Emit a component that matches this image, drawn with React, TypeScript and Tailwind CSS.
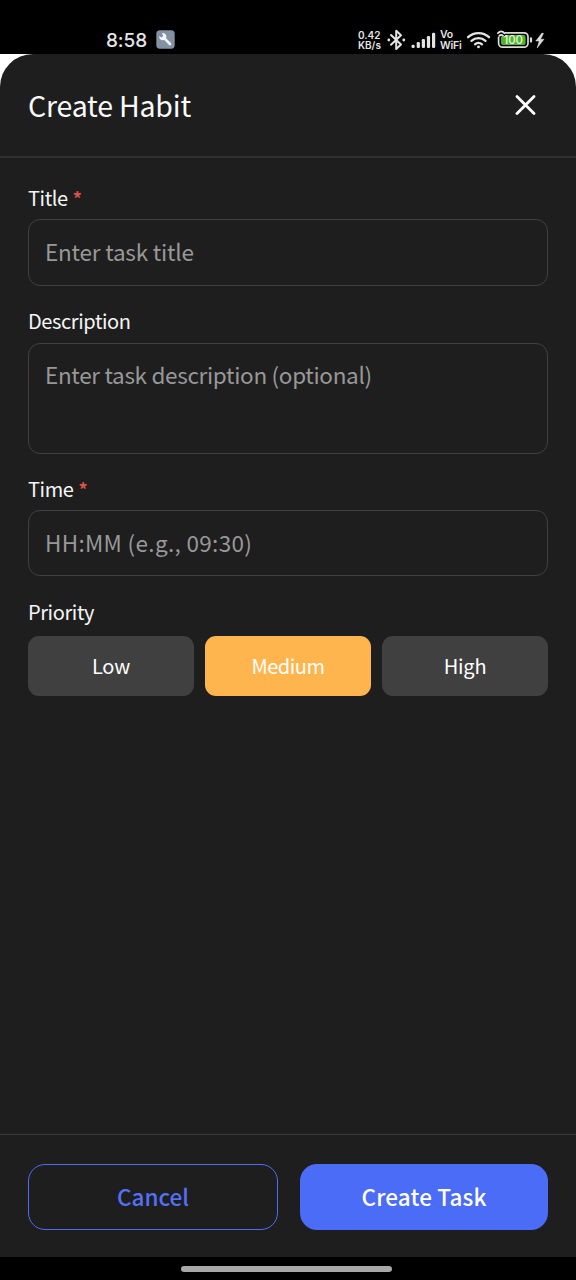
import React from "react";

function StatusBar() {
  return (
    <div className="flex h-[54px] shrink-0 items-start bg-black pt-[26px] text-[#e4e4e4]">
      <span className="ml-[106px] mt-[1px] w-[50px] whitespace-nowrap font-['Inter'] text-[19px] font-medium leading-[28px] tracking-[-0.1px]">8:58</span>
      <svg className="mt-[4px] h-[19px] w-[19px] shrink-0" viewBox="0 0 19 19">
        <rect x="0.3" y="0.3" width="18.4" height="18.4" rx="3.6" fill="#8292a3" />
        <path d="M8.2 8.2 14 14" stroke="#f3f5f7" strokeWidth="2.6" strokeLinecap="round" />
        <path d="M6 3.2a3.6 3.6 0 1 1-2.8 3l2.4 1.3 1.6-1.6z" fill="#f3f5f7" />
      </svg>
      <div className="ml-[183px] mt-[4px] w-[29px] shrink-0 whitespace-nowrap font-['Inter'] text-[10px] font-semibold leading-[10px]">
        <div>0.42</div>
        <div>KB/s</div>
      </div>
      <svg className="mt-[3px] h-[22px] w-[19px] shrink-0" viewBox="0 0 19 22" fill="none" stroke="currentColor" strokeWidth="2">
        <path d="M4 6 14 15.5 9.2 20V1.8L14 6.3 4 15.8" strokeLinejoin="round" strokeLinecap="round" />
        <circle cx="1.8" cy="11" r="1.4" fill="currentColor" stroke="none" />
        <circle cx="16.8" cy="11" r="1.4" fill="currentColor" stroke="none" />
      </svg>
      <svg className="ml-[5px] mt-[6px] h-[17px] w-[25px] shrink-0" viewBox="0 0 25 17" fill="currentColor">
        <rect x="0.5" y="12.8" width="3.2" height="3.2" rx="1.2" />
        <rect x="5.7" y="10" width="3.2" height="6" rx="1.2" />
        <rect x="10.8" y="7" width="3.2" height="9" rx="1.2" />
        <rect x="15.9" y="4" width="3.2" height="12" rx="1.2" />
        <rect x="21" y="0.8" width="3.2" height="15.2" rx="1.2" />
      </svg>
      <div className="ml-[4px] mt-[3px] w-[23px] shrink-0 whitespace-nowrap font-['Inter'] text-[10.5px] font-semibold leading-[11px] tracking-[-0.2px]">
        <div>Vo</div>
        <div>WiFi</div>
      </div>
      <svg className="ml-[3px] mt-[5px] h-[18px] w-[25px] shrink-0" viewBox="0 0 25 18" fill="none" stroke="currentColor" strokeWidth="2.3" strokeLinecap="round">
        <path d="M2 6.2a15.3 15.3 0 0 1 21 0" />
        <path d="M5.5 9.9a10.2 10.2 0 0 1 14 0" />
        <path d="M9 13.3a5.2 5.2 0 0 1 7 0" />
        <circle cx="12.5" cy="15.9" r="1.4" fill="currentColor" stroke="none" />
      </svg>
      <svg className="ml-[6px] mt-[4px] h-[20px] w-[50px] shrink-0" viewBox="0 0 50 20">
        <rect x="1.6" y="2.8" width="29.4" height="14.4" rx="4" fill="none" stroke="#dcdcdc" strokeWidth="1.7" />
        <rect x="4" y="5" width="24.6" height="10" rx="2" fill="#4fb526" />
        <path d="M34 8.4v3.2" stroke="#dcdcdc" strokeWidth="2.2" strokeLinecap="round" />
        <path d="M0 0h8v6.6H0z" fill="#000" />
        <path d="M1 3.2Q4.2-.6 7.4 3.2M2.4 5.8q1.8-2 3.6 0" fill="none" stroke="#e4e4e4" strokeWidth="1.8" strokeLinecap="round" />
        <text x="16.2" y="14.2" textAnchor="middle" fontFamily="Inter" fontSize="11.5" fontWeight="500" fill="#e8f5e2">100</text>
        <path d="m45 3-6.2 8h3.4l-2 7 6.8-8.8h-3.5L46.5 3.4z" fill="#dcdcdc" stroke="#dcdcdc" strokeWidth="0.5" />
      </svg>
    </div>
  );
}

function Label({ text, required }: { text: string; required?: boolean }) {
  return (
    <div className="flex h-[28px] items-center whitespace-nowrap text-[20px] leading-[28px] tracking-[-0.4px] text-[#f5f5f5]">
      <span>{text}</span>
      {required && <span className="ml-[5px] text-[18px] font-bold text-[#dd4f4b]">*</span>}
    </div>
  );
}

const box =
  "rounded-[12px] border border-[#404040] px-[16px] text-[22.5px] leading-[32px] text-[#989898] whitespace-nowrap";

export default function App() {
  return (
    <div className="flex h-[1280px] w-[576px] flex-col overflow-hidden bg-black font-['Noto_Sans_CJK_SC',sans-serif]">
      <StatusBar />
      <div className="flex flex-1 flex-col bg-white">
        <div className="flex flex-1 flex-col rounded-t-[33px] bg-[#1e1e1e]">
          <header className="flex h-[104px] shrink-0 items-center justify-between border-b-2 border-[#303030] pl-[28px] pr-[40px]">
            <h1 className="text-[28.5px] leading-[40px] tracking-[-0.2px] text-[#fafafa]">Create Habit</h1>
            <svg className="h-[20px] w-[21px]" viewBox="0 0 21 20" fill="none" stroke="#fff" strokeWidth="2.8" strokeLinecap="round">
              <path d="M2 1.5 19 18.5M19 1.5 2 18.5" />
            </svg>
          </header>
          <main className="flex flex-1 flex-col px-[28px] pt-[26px]">
            <Label text="Title" required />
            <div className={`${box} mt-[7px] h-[67px] pt-[15px] tracking-[-0.2px]`}>Enter task title</div>
            <div className="mt-[21px]"><Label text="Description" /></div>
            <div className={`${box} mt-[8px] h-[111px] pt-[14px] tracking-[-0.32px]`}>Enter task description (optional)</div>
            <div className="mt-[21px]"><Label text="Time" required /></div>
            <div className={`${box} mt-[7px] h-[66px] pt-[15px] tracking-[0.33px]`}>HH:MM (e.g., 09:30)</div>
            <div className="mt-[22px]"><Label text="Priority" /></div>
            <div className="mt-[10px] grid h-[60px] grid-cols-3 gap-[11px] text-[20px] leading-[28px] text-white">
              <div className="flex items-center justify-center rounded-[11px] bg-[#404040] tracking-[-0.2px]">Low</div>
              <div className="flex items-center justify-center rounded-[11px] bg-[#ffb54d] tracking-[-0.5px]">Medium</div>
              <div className="flex items-center justify-center rounded-[11px] bg-[#404040] tracking-[-0.2px]">High</div>
            </div>
          </main>
          <footer className="flex h-[123px] shrink-0 gap-[22px] border-t border-[#3a3a3a] px-[28px] pt-[29px] text-[22.5px] font-medium leading-[32px]">
            <div className="flex h-[66px] w-[250px] items-center justify-center rounded-[17px] border border-[#4c6ef5] pb-[2px] text-[#5470f5]">Cancel</div>
            <div className="flex h-[66px] w-[248px] items-center justify-center rounded-[17px] bg-[#4a6cf7] pb-[2px] tracking-[0.15px] text-white">Create Task</div>
          </footer>
        </div>
      </div>
      <div className="flex h-[23px] shrink-0 justify-center bg-black pt-[9px] pr-[4px]">
        <div className="h-[6px] w-[211px] rounded-full bg-[#a8a8a8]" />
      </div>
    </div>
  );
}
